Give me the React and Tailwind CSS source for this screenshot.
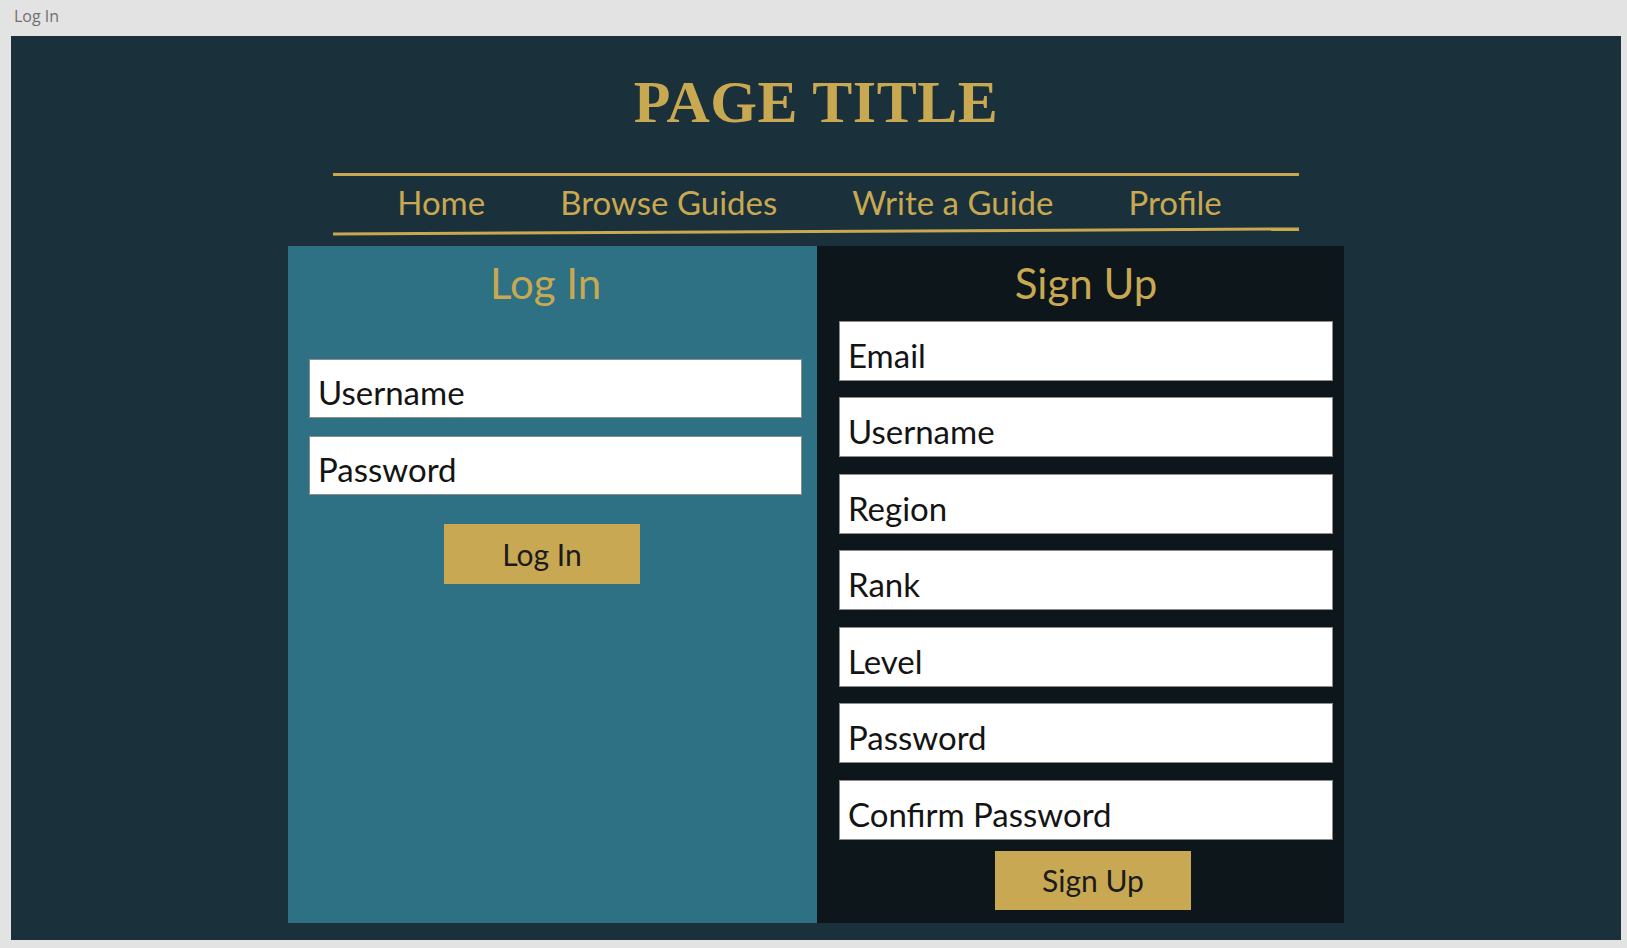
import { useState } from "react";

const navItems = ["Home", "Browse Guides", "Write a Guide", "Profile"];

const signUpFields = [
  "Email",
  "Username",
  "Region",
  "Rank",
  "Level",
  "Password",
  "Confirm Password",
];

function Field({ placeholder, type = "text", className = "" }) {
  return (
    <input
      type={type}
      placeholder={placeholder}
      className={`block w-full bg-white border border-[#8c8c8c] pl-[8px] pt-[8px] text-[33px] leading-[1.2] text-[#141414] placeholder:text-[#141414] outline-none ${className}`}
    />
  );
}

export default function App() {
  const [form, setForm] = useState({});

  return (
    <div className="min-h-screen bg-[#e3e3e3] font-['Lato',sans-serif]">
      <div className="h-[36px] pl-[14px] pt-[4px] font-['Open_Sans',sans-serif] text-[16px] text-[#707070]">
        Log In
      </div>

      <div className="ml-[11px] flex h-[904px] w-[1610px] flex-col items-center bg-[#1a303a]">
        <h1 className="mt-[36px] font-['Liberation_Serif',serif] text-[60px] font-bold leading-none tracking-[0.5px] text-[#c9a852]">
          PAGE TITLE
        </h1>

        <nav className="mt-[41px] w-[966px]">
          <div className="h-[3px] bg-[#c9a852]" />
          <ul className="flex justify-center gap-[75px] pb-[7px] pr-[13px] pt-[7px] text-[33px] leading-[1.2] text-[#c9a852]">
            {navItems.map((item) => (
              <li key={item}>
                <a href="#">{item}</a>
              </li>
            ))}
          </ul>
          <div className="h-[3px] rotate-[-0.3deg] bg-[#c9a852]" />
        </nav>

        <div className="mt-[13px] flex">
          {/* log in panel */}
          <form
            className="flex h-[677px] w-[529px] flex-col bg-[#2e7184] pl-[21px] pr-[15px] pt-[12px]"
            onSubmit={(e) => e.preventDefault()}
          >
            <h2 className="pr-[20px] text-center text-[42px] leading-[1.2] text-[#c9a852]">
              Log In
            </h2>
            <Field placeholder="Username" className="mt-[51px] h-[59px]" />
            <Field
              placeholder="Password"
              type="password"
              className="mt-[18px] h-[59px]"
            />
            <button
              type="submit"
              className="ml-[135px] mt-[29px] h-[60px] w-[196px] bg-[#c9a854] text-[30px] leading-[1.2] text-[#1b1b1b]"
            >
              Log In
            </button>
          </form>

          {/* sign up panel */}
          <form
            className="flex h-[677px] w-[527px] flex-col bg-[#0d161b] pl-[22px] pr-[11px] pt-[12px]"
            onSubmit={(e) => e.preventDefault()}
          >
            <h2 className="text-center text-[42px] leading-[1.2] text-[#c9a852]">
              Sign Up
            </h2>
            <div className="mt-[13px] flex flex-col gap-[16.5px]">
              {signUpFields.map((f) => (
                <Field
                  key={f}
                  placeholder={f}
                  type={f.includes("Password") ? "password" : "text"}
                  className="h-[60px]"
                />
              ))}
            </div>
            <button
              type="submit"
              className="ml-[156px] mt-[11px] h-[59px] w-[196px] bg-[#c9a854] text-[30px] leading-[1.2] text-[#1b1b1b]"
            >
              Sign Up
            </button>
          </form>
        </div>
      </div>
    </div>
  );
}
